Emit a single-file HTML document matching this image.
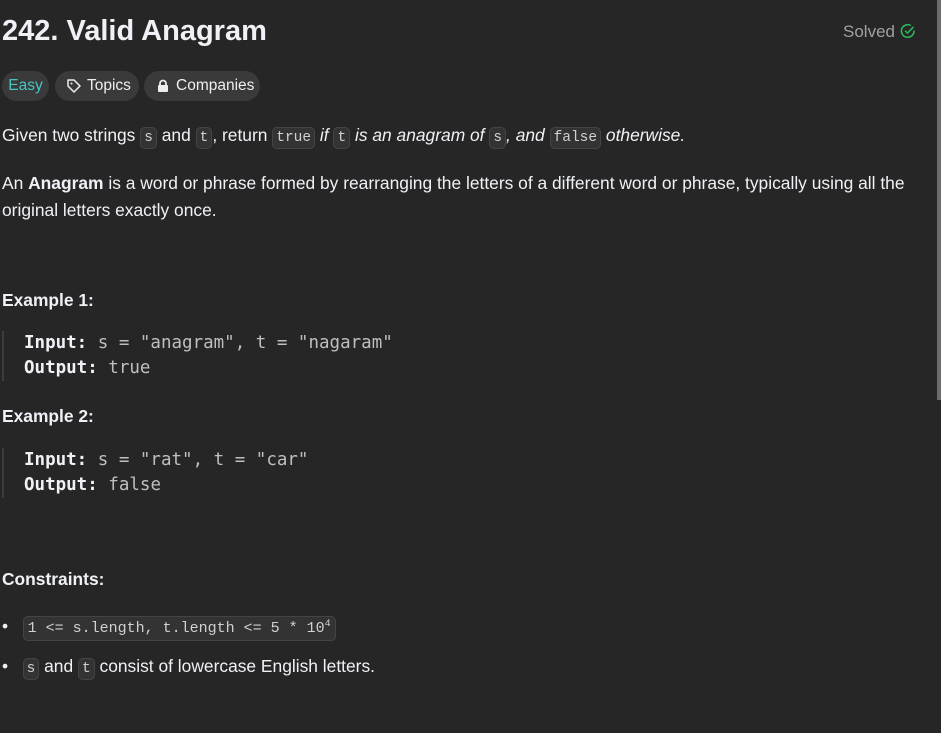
<!DOCTYPE html>
<html><head><meta charset="utf-8"><style>
body{margin:0;width:941px;height:733px;background:#262626;color:#eff1f6;font-family:"Liberation Sans",sans-serif;font-size:17.4px;position:relative;overflow:hidden}
.a{position:absolute;white-space:nowrap}
code{font-family:"Liberation Mono",monospace;font-size:14.5px;font-style:normal;background:#333;border:1px solid #444;border-radius:5px;padding:2px 3px;color:#d0d0d0}
.pill{position:absolute;top:71px;height:30px;border-radius:15px;background:#3a3a3a;font-size:15.5px;line-height:30px;color:#eee}
.pre{position:absolute;left:2px;border-left:2px solid #3c3c3c;padding-left:20px;font-family:"DejaVu Sans Mono","Liberation Mono",monospace;font-size:17.5px;line-height:25px;color:#bfbfbf}
.pre b{color:#eff1f6}
</style></head><body>
<div class="a" style="left:2px;top:15px;font-size:29px;font-weight:bold">242. Valid Anagram</div>
<div class="a" style="left:843px;top:22px;color:#a0a0a0;font-size:17px">Solved <svg width="16" height="16" viewBox="0 0 16 16" style="vertical-align:-2px"><path d="M14 7.6A6.3 6.3 0 1 1 10.8 2.5" fill="none" stroke="#2cbb5d" stroke-width="1.5"/><path d="M5 7.6l2.5 2.5 6-6.2" fill="none" stroke="#2cbb5d" stroke-width="1.5"/></svg></div>
<div class="pill" style="left:2px;width:47px;text-align:center;color:#46c6c2">Easy</div>
<div class="pill" style="left:55px;width:84px"><svg width="16" height="16" viewBox="0 0 16 16" style="position:absolute;left:11px;top:7px"><path d="M2 2h6l6 6-6 6-6-6z" fill="none" stroke="#eee" stroke-width="1.5" stroke-linejoin="round"/><circle cx="5.5" cy="5.5" r="1" fill="#eee"/></svg><span style="position:absolute;left:32px">Topics</span></div>
<div class="pill" style="left:144px;width:116px"><svg width="14" height="14" viewBox="0 0 14 14" style="position:absolute;left:12px;top:8px"><rect x="2" y="6" width="10" height="7" rx="1" fill="#eee"/><path d="M4 6V4.5a3 3 0 0 1 6 0V6" fill="none" stroke="#eee" stroke-width="1.8"/></svg><span style="position:absolute;left:32px">Companies</span></div>
<div class="a" style="left:2px;top:125px">Given two strings <code>s</code> and <code>t</code>, return <code>true</code> <i>if <code>t</code> is an anagram of <code>s</code>, and <code>false</code> otherwise.</i></div>
<div class="a" style="left:2px;top:170px;line-height:27px">An <b>Anagram</b> is a word or phrase formed by rearranging the letters of a different word or phrase, typically using all the<br>original letters exactly once.</div>
<div class="a" style="left:2px;top:290px;font-weight:bold">Example 1:</div>
<div class="pre" style="top:331px"><b>Input:</b> s = "anagram", t = "nagaram"<br><b>Output:</b> true</div>
<div class="a" style="left:2px;top:406px;font-weight:bold">Example 2:</div>
<div class="pre" style="top:448px"><b>Input:</b> s = "rat", t = "car"<br><b>Output:</b> false</div>
<div class="a" style="left:2px;top:569px;font-weight:bold">Constraints:</div>
<div class="a" style="left:2px;top:616px">•&nbsp;&nbsp; <code style="font-size:15px;padding:3px 4px">1 &lt;= s.length, t.length &lt;= 5 * 10<sup style="font-size:10px">4</sup></code></div>
<div class="a" style="left:2px;top:656px">•&nbsp;&nbsp; <code>s</code> and <code>t</code> consist of lowercase English letters.</div>
<div style="position:absolute;left:937px;top:0;width:4px;height:400px;background:#6b6b6b"></div>
</body></html>
